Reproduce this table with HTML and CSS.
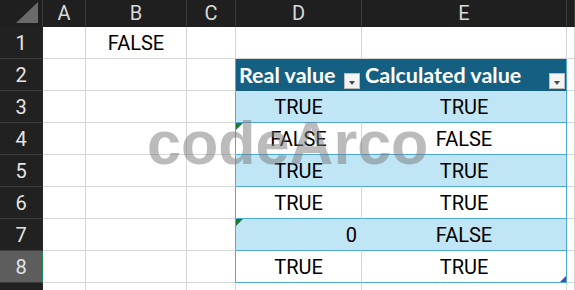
FILE: index.html
```html
<!DOCTYPE html>
<html>
<head>
<meta charset="utf-8">
<link rel="stylesheet" href="styles.css">
</head>
<body>
<div class="sheet">
  <div class="c h corner"><svg class="corner-tri" width="22" height="21" viewBox="0 0 22 21"><polygon points="0,21 22,21 22,0" fill="#6a6a6a"/></svg></div>
  <div class="c h">A</div>
  <div class="c h">B</div>
  <div class="c h">C</div>
  <div class="c h">D</div>
  <div class="c h">E</div>
  <div class="c h"></div>

  <div class="c rh">1</div>
  <div class="c"></div>
  <div class="c">FALSE</div>
  <div class="c"></div>
  <div class="c"></div>
  <div class="c"></div>
  <div class="c"></div>

  <div class="c rh">2</div>
  <div class="c"></div>
  <div class="c"></div>
  <div class="c tl"></div>
  <div class="c th"><span>Real value</span><span class="dd"></span></div>
  <div class="c th te"><span>Calculated value</span><span class="dd"></span></div>
  <div class="c"></div>

  <div class="c rh">3</div>
  <div class="c"></div>
  <div class="c"></div>
  <div class="c tl"></div>
  <div class="c band td">TRUE</div>
  <div class="c band te">TRUE</div>
  <div class="c"></div>

  <div class="c rh">4</div>
  <div class="c"></div>
  <div class="c"></div>
  <div class="c tl"></div>
  <div class="c plain td err">FALSE</div>
  <div class="c plain te">FALSE</div>
  <div class="c"></div>

  <div class="c rh">5</div>
  <div class="c"></div>
  <div class="c"></div>
  <div class="c tl"></div>
  <div class="c band td">TRUE</div>
  <div class="c band te">TRUE</div>
  <div class="c"></div>

  <div class="c rh">6</div>
  <div class="c"></div>
  <div class="c"></div>
  <div class="c tl"></div>
  <div class="c plain td">TRUE</div>
  <div class="c plain te">TRUE</div>
  <div class="c"></div>

  <div class="c rh">7</div>
  <div class="c"></div>
  <div class="c"></div>
  <div class="c tl"></div>
  <div class="c band td err num">0</div>
  <div class="c band te">FALSE</div>
  <div class="c"></div>

  <div class="c rh sel">8</div>
  <div class="c"></div>
  <div class="c"></div>
  <div class="c tl"></div>
  <div class="c plain td">TRUE</div>
  <div class="c plain te resize">TRUE</div>
  <div class="c"></div>

  <div class="c rh"></div>
  <div class="c"></div>
  <div class="c"></div>
  <div class="c"></div>
  <div class="c"></div>
  <div class="c"></div>
  <div class="c"></div>

  <div class="wm">codeArco</div>
</div>
</body>
</html>
```

FILE: styles.css
```css
html, body {
  margin: 0;
  padding: 0;
  background: #ffffff;
}

.sheet {
  position: relative;
  width: 575px;
  height: 290px;
  overflow: hidden;
  display: grid;
  grid-template-columns: 43px 43px 101px 49px 126px 205px 1fr;
  grid-template-rows: 27px repeat(9, 32px);
  font-family: Roboto, "Liberation Sans", sans-serif;
  font-size: 20px;
  color: #000;
}

.c {
  box-sizing: border-box;
  border-right: 1px solid #d6d6d6;
  border-bottom: 1px solid #d6d6d6;
  display: flex;
  align-items: center;
  justify-content: center;
  min-width: 0;
  white-space: nowrap;
  position: relative;
}

.h {
  background: #1f1f1f;
  color: #d9d9d9;
  border-right-color: #3c3c3c;
  border-bottom-color: #1f1f1f;
  font-size: 20px;
}

.corner {
  justify-content: flex-end;
  align-items: flex-end;
  padding: 0 4px 3px 0;
}

.corner-tri {
  display: block;
}

.rh {
  background: #212121;
  color: #e4e4e4;
  border-right-color: #262626;
  border-bottom-color: #3e3e3e;
}

.rh.sel {
  background: #5d5d5d;
  border-right-color: #1e8a52;
}

.tl {
  border-right-color: #4ea8d8;
}

.th {
  background: #156082;
  color: #ffffff;
  font-family: Lato, "Liberation Sans", sans-serif;
  font-weight: 700;
  font-size: 21.5px;
  justify-content: space-between;
  padding-left: 3px;
  border-right-color: #156082;
  border-bottom-color: #156082;
}

.th.te {
  border-right-color: #4ea8d8;
}

.dd {
  align-self: flex-end;
  box-sizing: border-box;
  width: 16px;
  height: 16px;
  margin: 0 1px 1px 0;
  background: #f4f4f4;
  border: 1px solid #bdbdbd;
  display: flex;
  justify-content: center;
  align-items: center;
  padding-top: 3px;
}

.dd::after {
  content: "";
  width: 0;
  height: 0;
  border-left: 3.5px solid transparent;
  border-right: 3.5px solid transparent;
  border-top: 4px solid #4a4a4a;
}

.band {
  background: #c0e6f5;
  border-bottom-color: #4ea8d8;
}

.band.td {
  border-right-color: #c0e6f5;
}

.plain {
  background: #ffffff;
  border-bottom-color: #4ea8d8;
}

.plain.td {
  border-right-color: #d6d6d6;
}

.te {
  border-right-color: #4ea8d8;
}

.num {
  justify-content: flex-end;
  padding-right: 4px;
}

.err::before {
  content: "";
  position: absolute;
  top: 0;
  left: 0;
  width: 0;
  height: 0;
  border-top: 7px solid #1a7a36;
  border-right: 7px solid transparent;
}

.resize::after {
  content: "";
  position: absolute;
  right: 0;
  bottom: 0;
  width: 0;
  height: 0;
  border-bottom: 6px solid #4747a6;
  border-left: 6px solid transparent;
}

.wm {
  position: absolute;
  left: 147px;
  top: 113px;
  font-family: "Liberation Sans", Arial, sans-serif;
  font-weight: 700;
  font-size: 61px;
  line-height: 61px;
  color: rgba(120, 120, 120, 0.5);
  pointer-events: none;
}
```
